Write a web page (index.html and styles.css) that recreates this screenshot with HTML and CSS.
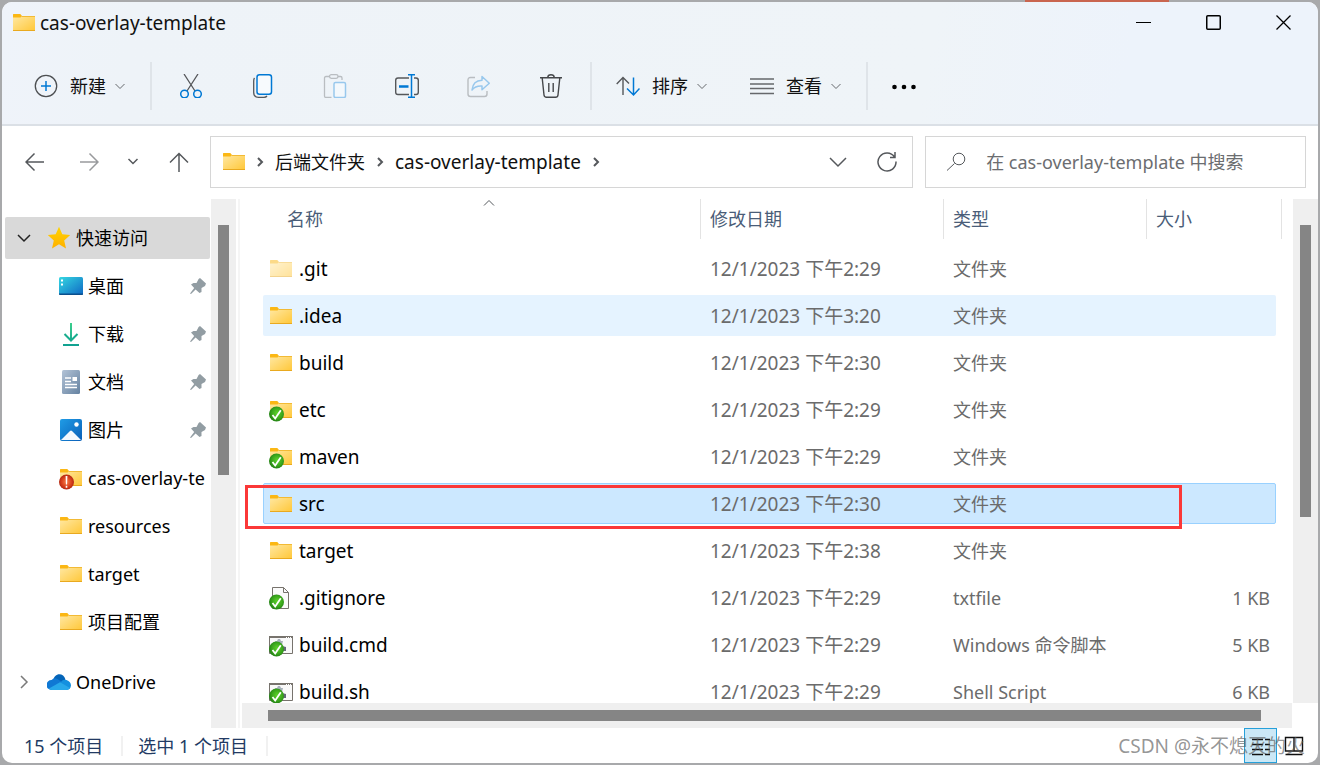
FILE: index.html
```html
<!DOCTYPE html>
<html lang="zh-CN">
<head>
<meta charset="utf-8">
<title>cas-overlay-template</title>
<link rel="stylesheet" href="styles.css">
</head>
<body>
<svg class="defs" width="0" height="0" aria-hidden="true">
  <defs>
    <linearGradient id="gFolder" x1="0" y1="0" x2="1" y2="1"><stop offset="0" stop-color="#ffe8a3"/><stop offset="1" stop-color="#ffc738"/></linearGradient>
    <linearGradient id="gDesk" x1="0" y1="0" x2="1" y2="1"><stop offset="0" stop-color="#35d8e2"/><stop offset="1" stop-color="#0f68c4"/></linearGradient>
    <linearGradient id="gDown" x1="0" y1="0" x2="0" y2="1"><stop offset="0" stop-color="#3bcf8c"/><stop offset="1" stop-color="#0fa091"/></linearGradient>
    <linearGradient id="gDoc" x1="0" y1="0" x2="1" y2="1"><stop offset="0" stop-color="#b3c3d6"/><stop offset="1" stop-color="#6582a1"/></linearGradient>
    <linearGradient id="gPic" x1="0" y1="0" x2="1" y2="1"><stop offset="0" stop-color="#1f9ce6"/><stop offset="1" stop-color="#0a5fb8"/></linearGradient>
    <linearGradient id="gStar" x1="0" y1="0" x2="0" y2="1"><stop offset="0" stop-color="#ffd400"/><stop offset="1" stop-color="#ffb000"/></linearGradient>
    <radialGradient id="gOk" cx=".55" cy=".45" r=".6"><stop offset="0" stop-color="#5fd42c"/><stop offset=".6" stop-color="#3aa51c"/><stop offset="1" stop-color="#1d7a12"/></radialGradient>
    <radialGradient id="gBad" cx=".5" cy=".5" r=".55"><stop offset="0" stop-color="#f7804a"/><stop offset=".6" stop-color="#d8401c"/><stop offset="1" stop-color="#a82210"/></radialGradient>
  </defs>
  <symbol id="folder" viewBox="0 0 24 24">
    <path d="M1 3.500Q1 3 1.500 3H8.300L10 5L9 7H1Z" fill="#fbb714"/>
    <path d="M1 6.500H8.500L10.200 5H23V20H1Z" fill="url(#gFolder)"/>
    <path d="M9.500 5.500H23" stroke="#f2ba35"/><path d="M1 19.500H23" stroke="#e9a91f"/>
  </symbol>
  <symbol id="ok" viewBox="0 0 24 24">
    <circle cx="7.500" cy="16" r="7.500" fill="url(#gOk)"/>
    <path d="M3.500 17L6.200 20.500L11.800 12.300" fill="none" stroke="#fff" stroke-width="1.800"/>
  </symbol>
  <symbol id="folder-ok" viewBox="0 0 24 24"><use href="#folder"/><use href="#ok"/></symbol>
  <symbol id="folder-bad" viewBox="0 0 24 24">
    <use href="#folder"/><circle cx="7.500" cy="16" r="7.500" fill="url(#gBad)"/>
    <path d="M6.600 10H8.400L8.100 18.500H6.900ZM6.700 19.800H8.300V21.800H6.700Z" fill="#fff"/>
  </symbol>
  <symbol id="file-ok" viewBox="0 0 24 24">
    <path d="M3.500 1.500H14.500L19.500 6.500V22.500H3.500Z" fill="#fbfbfb" stroke="#77736d"/>
    <path d="M14.500 1.500V6.500H19.500" fill="none" stroke="#77736d"/><use href="#ok"/>
  </symbol>
  <symbol id="script-ok" viewBox="0 0 24 24">
    <path d="M.5 3.500H23.500V20.500H.5Z" fill="#f9f9f9" stroke="#77736d"/><path d="M0 4H24" stroke="#77736d" stroke-width="2"/>
    <path d="M17 4.500H23" stroke="#fff" stroke-dasharray="1 1"/>
    <path d="M6 8L8 8L9 6H11L12 8L14 8L13 12H6Z" fill="#a7b1ba"/><path d="M13 13L17 14V18H13Z" fill="#646a78"/><use href="#ok"/>
  </symbol>
  <symbol id="pin" viewBox="0 0 16 16"><path d="M10 0L16 5.500L15 8L11.500 10V14L9.500 15L5.600 11.500L1 16L0 15.500L4.200 10L1 6.500L3.500 5H6.500L8.600 1Z" fill="#929da3"/></symbol>
  <symbol id="down" viewBox="0 0 12 12"><path d="M1.500 4L6 8.500L10.500 4" fill="none" stroke="currentColor" stroke-width="1"/></symbol>
</svg>

<main class="window">
  <header class="top">
    <div class="titlebar">
      <svg class="ico"><use href="#folder"/></svg>
      <h1 class="title">cas-overlay-template</h1>
      <div class="caption">
        <button aria-label="最小化"><svg class="cap"><path d="M0 7.500H15" stroke="#000"/></svg></button>
        <button aria-label="最大化"><svg class="cap"><rect x=".75" y=".75" width="13.500" height="13.500" rx="1" fill="none" stroke="#000" stroke-width="1.500"/></svg></button>
        <button aria-label="关闭"><svg class="cap"><path d="M.5 .5L14.500 14.500M14.500 .5L.5 14.500" stroke="#000" stroke-width="1.300"/></svg></button>
      </div>
    </div>
    <div class="toolbar">
      <button class="tool wide"><svg class="ico" fill="none" viewBox="0 0 24 24"><circle cx="12" cy="12" r="10.700" stroke="#4d4f52" stroke-width="1.300"/><path d="M12 7V17M7 12H17" stroke="#0078d4" stroke-width="1.500"/></svg><span>新建</span><svg class="chev"><use href="#down"/></svg></button>
      <i class="sep"></i>
      <button class="tool" aria-label="剪切"><svg class="ico" fill="none" viewBox="0 0 24 24"><path d="M5 0L16 17M19 0L8 17" stroke="#55575a" stroke-width="1.300"/><circle cx="5.500" cy="20" r="3.800" stroke="#0078d4" stroke-width="1.500"/><circle cx="18.500" cy="20" r="3.800" stroke="#0078d4" stroke-width="1.500"/></svg></button>
      <button class="tool" aria-label="复制"><svg class="ico" fill="none" viewBox="0 0 24 24"><path d="M3.500 4Q2.700 5 2.700 7V18.500Q2.700 23.300 7.500 23.300H13Q15 23.300 16 22" stroke="#55575a" stroke-width="1.300"/><rect x="6" y=".8" width="14.500" height="19.500" rx="2.500" stroke="#0078d4" stroke-width="1.500" fill="#f7fafd"/></svg></button>
      <button class="tool" aria-label="粘贴"><svg class="ico" fill="none" viewBox="0 0 24 24"><path d="M7 2.500H3Q1.500 2.500 1.500 4V22Q1.500 23.500 3 23.500H8.500M15 2.500H17.500Q19 2.500 19 4V6" stroke="#b9bdc1" stroke-width="1.300"/><rect x="6.500" y=".7" width="8.500" height="3.600" rx="1.800" stroke="#b9bdc1" stroke-width="1.300"/><rect x="11" y="8.500" width="11.500" height="15" rx="1.500" stroke="#98c8ed" stroke-width="1.500" fill="#f3f8fc"/></svg></button>
      <button class="tool" aria-label="重命名"><svg class="ico" fill="none" viewBox="0 0 24 24"><path d="M14 4H3Q.7 4 .7 6.300V18.200Q.7 20.500 3 20.500H14M19 4H21Q23.300 4 23.300 6.300V18.200Q23.300 20.500 21 20.500H19" stroke="#55575a" stroke-width="1.400"/><path d="M16.500 .7V23.300M13 .7H20M13 23.300H20" stroke="#0078d4" stroke-width="1.500"/><path d="M4 12.500H13.500" stroke="#0078d4" stroke-width="2.400"/></svg></button>
      <button class="tool" aria-label="共享"><svg class="ico" fill="none" viewBox="0 0 24 24"><path d="M8 3.500H3.500Q1 3.500 1 6V20Q1 22.500 3.500 22.500H17.500Q20 22.500 20 20V17" stroke="#b9bdc1" stroke-width="1.400"/><path d="M5 16Q6 6.500 15 6.300V2.500L22.300 9.300L15 15.800V12Q8.500 11.500 5 16Z" stroke="#98c8ed" stroke-width="1.500" stroke-linejoin="round"/></svg></button>
      <button class="tool" aria-label="删除"><svg class="ico" fill="none" viewBox="0 0 24 24"><path d="M1 3.800H23M8.700 3.500Q9 .8 12 .8T15.300 3.500M3.200 4L5 21Q5.200 23.200 7.500 23.200H16.500Q18.800 23.200 19 21L20.800 4M9.800 9V18M14.200 9V18" stroke="#45474a" stroke-width="1.400"/></svg></button>
      <i class="sep"></i>
      <button class="tool wide"><svg class="ico" fill="none" viewBox="0 0 24 24"><path d="M7 21V3.500M.7 10L7 3.500L13 9.500" stroke="#55575a" stroke-width="1.400"/><path d="M17.500 3.500V21M11 14.500L17.500 21L23.500 14.500" stroke="#0078d4" stroke-width="1.500"/></svg><span>排序</span><svg class="chev"><use href="#down"/></svg></button>
      <button class="tool wide"><svg class="ico" fill="none" viewBox="0 0 24 24"><path d="M0 5H24M0 10H24M0 14.500H24M0 19.500H24" stroke="#66686b" stroke-width="1.400"/></svg><span>查看</span><svg class="chev"><use href="#down"/></svg></button>
      <i class="sep"></i>
      <button class="tool wide" aria-label="更多"><svg class="ico" viewBox="0 0 24 24"><circle cx="2.500" cy="13" r="2.300"/><circle cx="12" cy="13" r="2.300"/><circle cx="21.500" cy="13" r="2.300"/></svg></button>
    </div>
  </header>

  <nav class="navrow" aria-label="导航">
    <div class="arrows">
      <button aria-label="后退"><svg class="nav-ico" viewBox="0 0 20 20"><path d="M19 10H1.500M9.500 1.500L1 10L9.500 18.500"/></svg></button>
      <button aria-label="前进" class="fwd dim"><svg class="nav-ico" viewBox="0 0 20 20"><path d="M1 10H18.500M10.500 1.500L19 10L10.500 18.500"/></svg></button>
      <button aria-label="最近位置" class="recent"><svg class="nav-ico" viewBox="0 0 20 20"><path d="M5.500 7L10 11.500L14.500 7"/></svg></button>
      <button aria-label="向上"><svg class="nav-ico" viewBox="0 0 20 20"><path d="M10 20V1.500M1 10.500L10 1.500L19 10.500"/></svg></button>
    </div>
    <div class="fields">
      <div class="address">
        <svg class="ico"><use href="#folder"/></svg>
        <svg class="crumb" viewBox="0 0 8 12"><path d="M2 2L6 6L2 10"/></svg>
        <a href="#parent" class="zh">后端文件夹</a>
        <svg class="crumb" viewBox="0 0 8 12"><path d="M2 2L6 6L2 10"/></svg>
        <a href="#here">cas-overlay-template</a>
        <svg class="crumb" viewBox="0 0 8 12"><path d="M2 2L6 6L2 10"/></svg>
        <button class="history" aria-label="历史"><svg class="nav-ico" viewBox="0 0 20 20"><path d="M2 6L10 14L18 6"/></svg></button>
        <button aria-label="刷新"><svg class="nav-ico" viewBox="0 0 20 20"><path d="M18 0V5.500H13M17.500 5A9 9 0 1 0 19 9.500"/></svg></button>
      </div>
      <div class="search">
        <svg class="nav-ico glass" viewBox="0 0 20 20"><circle cx="13" cy="7" r="5.800"/><path d="M8.500 11.500L1 18.500"/></svg>
        <input type="search" aria-label="搜索" placeholder="在 cas-overlay-template 中搜索">
      </div>
    </div>
  </nav>

  <div class="body">
    <aside class="side">
      <a class="item root active" href="#quick"><svg class="tw" viewBox="0 0 14 14"><path d="M1 4L7 10L13 4"/></svg><svg class="ico" viewBox="0 0 24 24"><path d="M12 .8L15.300 8.300L23.200 9L17.200 14.500L19 22.500L12 18.300L5 22.500L6.800 14.500L.8 9L8.700 8.300Z" fill="url(#gStar)"/></svg><span>快速访问</span></a>
      <a class="item" href="#desktop"><svg class="ico" viewBox="0 0 24 24"><rect y="3" width="24" height="18" rx="1.500" fill="url(#gDesk)"/><path d="M0 19.500H24V20Q24 21 23 21H1Q0 21 0 20Z" fill="#0b4f8c"/><path d="M2 5.500h2v2H2zM2 9.500h2v2H2z" fill="#fff"/></svg><span>桌面</span><svg class="pin"><use href="#pin"/></svg></a>
      <a class="item" href="#downloads"><svg class="ico" viewBox="0 0 24 24"><path d="M11 1h2v16h-2zM4 22h16v2H4z" fill="url(#gDown)"/><path d="M5.500 12L12 18.500L18.500 12" fill="none" stroke="#18ad8e" stroke-width="2"/></svg><span>下载</span><svg class="pin"><use href="#pin"/></svg></a>
      <a class="item" href="#documents"><svg class="ico" viewBox="0 0 24 24"><rect x="3" width="18" height="24" rx="1.500" fill="url(#gDoc)"/><path d="M6 8H12M6 11.500H12M6 14.500H18M6 17.500H18" stroke="#fff" stroke-width="1.300"/><path d="M13.500 7H18V11H13.500Z" fill="#fff"/></svg><span>文档</span><svg class="pin"><use href="#pin"/></svg></a>
      <a class="item" href="#pictures"><svg class="ico" viewBox="0 0 24 24"><rect x="1" y="1" width="22" height="22" rx="2" fill="url(#gPic)"/><path d="M2 22L11 13Q12 12.200 13 13L22 22Z" fill="#f4f9fe"/><circle cx="17.500" cy="6.500" r="2.200" fill="#fff"/></svg><span>图片</span><svg class="pin"><use href="#pin"/></svg></a>
      <a class="item" href="#cas"><svg class="ico"><use href="#folder-bad"/></svg><span>cas-overlay-te</span></a>
      <a class="item" href="#resources"><svg class="ico"><use href="#folder"/></svg><span>resources</span></a>
      <a class="item" href="#target"><svg class="ico"><use href="#folder"/></svg><span>target</span></a>
      <a class="item" href="#config"><svg class="ico"><use href="#folder"/></svg><span>项目配置</span></a>
      <a class="item root cloud" href="#onedrive"><svg class="tw dim" viewBox="0 0 14 14"><path d="M4 1L10 7L4 13"/></svg><svg class="ico" viewBox="0 0 24 24"><path d="M6 11C7 2.500 16.500 2 18.500 9.500L12 15Z" fill="#0364b8"/><path d="M4.500 20A5 5 0 0 1 4.500 10Q8 6.500 12 10L18 14L10 20Z" fill="#0f78d4"/><path d="M14 12Q16 8.800 19.500 10Q24 11.500 24 15.500Q23.500 20 19 20H8Z" fill="#1490df"/><path d="M2 18.500L13 12.300L23 18Q21.500 20 19 20H5Q3 20 2 18.500Z" fill="#28a8ea"/></svg><span>OneDrive</span></a>
    </aside>
    <div class="vbar"><div class="vthumb short"></div></div>
    <div class="split"></div>
    <section class="main">
      <div class="list">
        <table class="files">
          <thead>
            <tr><th>名称<svg class="sort" viewBox="0 0 12 8"><path d="M1 6.500L6 1.500L11 6.500"/></svg></th><th>修改日期</th><th>类型</th><th>大小</th></tr>
          </thead>
          <tbody>
            <tr><td><svg class="ico faded"><use href="#folder"/></svg>.git</td><td>12/1/2023 下午2:29</td><td class="zh">文件夹</td><td></td></tr>
            <tr class="hover"><td><svg class="ico"><use href="#folder"/></svg>.idea</td><td>12/1/2023 下午3:20</td><td class="zh">文件夹</td><td></td></tr>
            <tr><td><svg class="ico"><use href="#folder"/></svg>build</td><td>12/1/2023 下午2:30</td><td class="zh">文件夹</td><td></td></tr>
            <tr><td><svg class="ico"><use href="#folder-ok"/></svg>etc</td><td>12/1/2023 下午2:29</td><td class="zh">文件夹</td><td></td></tr>
            <tr><td><svg class="ico"><use href="#folder-ok"/></svg>maven</td><td>12/1/2023 下午2:29</td><td class="zh">文件夹</td><td></td></tr>
            <tr class="selected"><td><svg class="ico"><use href="#folder"/></svg>src<i class="mark"></i></td><td>12/1/2023 下午2:30</td><td class="zh">文件夹</td><td></td></tr>
            <tr><td><svg class="ico"><use href="#folder"/></svg>target</td><td>12/1/2023 下午2:38</td><td class="zh">文件夹</td><td></td></tr>
            <tr><td><svg class="ico"><use href="#file-ok"/></svg>.gitignore</td><td>12/1/2023 下午2:29</td><td class="zh">txtfile</td><td>1 KB</td></tr>
            <tr><td><svg class="ico"><use href="#script-ok"/></svg>build.cmd</td><td>12/1/2023 下午2:29</td><td class="zh">Windows 命令脚本</td><td>5 KB</td></tr>
            <tr><td><svg class="ico"><use href="#script-ok"/></svg>build.sh</td><td>12/1/2023 下午2:29</td><td class="zh">Shell Script</td><td>6 KB</td></tr>
          </tbody>
        </table>
      </div>
      <div class="vbar"><div class="vthumb"></div></div>
      <div class="hbar"><div class="hthumb"></div></div>
    </section>
  </div>

  <footer class="status">
    <span class="count">15 个项目</span>
    <span class="count">选中 1 个项目</span>
    <div class="views">
      <button class="on" aria-label="详细信息"><svg class="view" viewBox="0 0 20 20"><path d="M1 3.500H12M1 8.500H12M1 13.500H12M1 18.500H12M14 3.500H19M14 8.500H19M14 13.500H19M14 18.500H19"/></svg></button>
      <button aria-label="大图标"><svg class="view" viewBox="0 0 20 20"><path d="M1.500 1.500H18.500V15H1.500ZM10 1.500V15M1.500 18.500H18.500"/></svg></button>
    </div>
    <span class="credit">CSDN @永不熄灭的火</span>
  </footer>
</main>
</body>
</html>
```
FILE: styles.css
```css
* { box-sizing: border-box; }

body {
  margin: 0;
  height: 100vh;
  padding: 2px;
  font: 19px/24px "Noto Sans", "Noto Sans CJK SC", sans-serif;
  color: #111;
  background:
    linear-gradient(90deg, transparent 1025px, #c9654f 1025px, #c9654f 1169px, transparent 1169px) top / 100% 2px no-repeat,
    #a8a9ab;
}

button {
  display: flex;
  align-items: center;
  justify-content: center;
  margin: 0;
  padding: 0;
  border: 0;
  background: none;
  font: inherit;
  color: inherit;
}

a { color: inherit; text-decoration: none; }
svg { flex: none; }
.defs { position: absolute; }
.ico { width: 24px; height: 24px; }
.zh { font-size: 18px; }

.window {
  height: 100%;
  display: flex;
  flex-direction: column;
  overflow: hidden;
  border-radius: 10px;
  background: #fff;
}

.top {
  border-bottom: 2px solid #dbe0e6;
  background: linear-gradient(100deg, #eff3fa, #eef3f8 10%, #eff4f8 70%, #edf3fb 85%);
}

.titlebar { display: flex; align-items: center; height: 41px; padding-left: 10px; }
.title { margin: 0 0 0 4px; font-size: 19px; font-weight: 400; line-height: 24px; color: #111; }
.caption { display: flex; margin-left: auto; }
.caption button { width: 70px; height: 41px; }
.cap { width: 15px; height: 15px; }

.toolbar { display: flex; align-items: center; height: 81px; padding: 5px 0 0 11px; font-size: 18px; }
.tool { width: 72px; height: 48px; }
.wide { width: auto; padding: 0 21px; gap: 12px; }
.chev { width: 12px; height: 12px; margin-left: -4px; color: #66696d; }
.sep { width: 2px; height: 48px; margin: 0 3px; background: #dfe4e9; }

.navrow { display: flex; padding: 10px 12px 11px 0; }
.arrows { display: flex; align-items: center; width: 208px; padding-left: 9px; }
.arrows button { width: 48px; height: 48px; }
.arrows .fwd { width: 60px; }
.arrows .recent { width: 28px; margin-right: 8px; }
.dim { opacity: .6; }
.nav-ico { width: 20px; height: 20px; fill: none; stroke: #55585c; stroke-width: 1.500; }

.fields { flex: 1; display: grid; grid-template-columns: minmax(0, 24fr) minmax(0, 13fr); column-gap: 12px; }
.address, .search { display: flex; align-items: center; height: 52px; border: 1px solid #d6d6d6; }
.address { padding: 0 8px 0 11px; gap: 11px; }
.address .ico { margin-right: -1px; }
.address button { width: 34px; height: 48px; }
.address .history { margin-left: auto; margin-right: 4px; }
.crumb { width: 8px; height: 12px; fill: none; stroke: #55585c; stroke-width: 2; }
.search { padding: 0 20px; gap: 20px; }
.glass { stroke-width: 1; }
.search input { flex: 1; min-width: 0; border: 0; padding: 0; outline: 0; font: inherit; font-size: 18px; background: none; }
.search input::placeholder { color: #6b6d70; opacity: 1; }

.body { flex: 1; display: flex; min-height: 0; }

.side {
  display: flex;
  flex-direction: column;
  gap: 6px;
  width: 209px;
  padding: 18px 1px 0 3px;
  font-size: 18px;
  color: #000;
}
.item {
  display: flex;
  align-items: center;
  gap: 5px;
  height: 42px;
  padding-left: 54px;
  white-space: nowrap;
}
.root { padding-left: 12px; }
.cloud { margin-top: 12px; }
.active { border-radius: 2px; background: #d9d9d9; }
.tw { width: 14px; height: 14px; margin-right: 11px; fill: none; stroke: #222; stroke-width: 1.500; }
.pin { width: 16px; height: 16px; margin: 0 4px 0 auto; }

.vbar { width: 25px; padding: 26px 7px 0; background: #efefef; }
.vthumb { height: 61%; background: #858585; }
.short { height: 250px; }
.split { width: 2px; margin: 0 2px; background: #f5f5f5; }

.main {
  flex: 1;
  display: grid;
  grid-template: minmax(0, 1fr) 25px / minmax(0, 1fr) 25px;
  column-gap: 1px;
}
.list { overflow: hidden; padding: 0 10px 0 21px; }
.hbar { padding: 7px 31px 0 26px; background: #efefef; }
.hthumb { height: 11px; background: #858585; }

.files, .files thead, .files tbody { display: block; }
.files tr { display: grid; grid-template-columns: minmax(0, 1fr) 243px 203px 128px; }
.files th {
  position: relative;
  height: 40px;
  padding: 8px 0 0 9px;
  border-right: 1px solid #e3e3e3;
  font-size: 18px;
  font-weight: 400;
  text-align: left;
  color: #4a5d78;
}
.files thead tr { grid-template-columns: minmax(0, 1fr) 243px 203px 135px; }
.files th:first-child { padding-left: 24px; }
.sort { position: absolute; top: 0; left: calc(50% + 1px); width: 12px; height: 8px; fill: none; stroke: #55585c; }

.files tbody tr {
  position: relative;
  height: 41px;
  margin: 0 6px 6px 0;
  border: 1px solid transparent;
  border-radius: 2px;
}
.files tbody { padding-top: 9px; }
.files td { display: flex; align-items: center; gap: 6px; padding: 0 0 0 9px; color: #6b6b6b; white-space: nowrap; }
.files td:first-child { padding-left: 5px; color: #000; }
.files td:last-child { justify-content: flex-end; padding-right: 5px; font-size: 18px; }
.files .hover { background: #e5f3ff; }
.files .selected { border-color: #99d1ff; background: #cce8ff; }
.faded { opacity: .5; }
.mark { position: absolute; inset: 1px 93px -6px -19px; border: 3px solid #fb3838; }

.status { position: relative; display: flex; align-items: center; height: 35px; padding-left: 22px; font-size: 18px; color: #223a63; }
.count { padding-right: 18px; margin-right: 15px; border-right: 2px solid #f1f1f1; line-height: 20px; }
.views { display: flex; margin-left: auto; padding-right: 8px; }
.views button { width: 33px; height: 35px; }
.views .on { border: 1px solid #26a0da; background: #cbe8f6; }
.view { width: 20px; height: 20px; fill: none; stroke: #111; stroke-width: 1.400; }
.credit { position: absolute; right: 13px; top: 6px; font-size: 19px; color: rgba(90, 90, 90, .65); }
```
